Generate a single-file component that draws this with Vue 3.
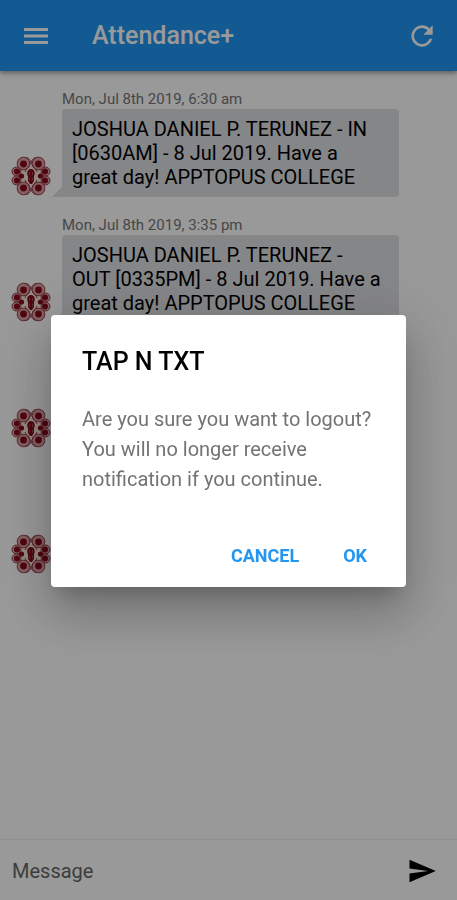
<template>
    <div class="chat-page">
        <header class="chat-header">
            <button type="button" class="icon-button" aria-label="Menu">
                <svg width="28" height="28" viewBox="0 0 28 28">
                    <path
                        d="M2 7.5h24M2 14h24M2 20.5h24"
                        fill="none"
                        stroke="currentColor"
                        stroke-width="2.8"
                    />
                </svg>
            </button>
            <h1 class="chat-title">Attendance+</h1>
            <button type="button" class="icon-button" aria-label="Refresh">
                <svg width="32" height="32" viewBox="0 0 24 24">
                    <path
                        d="M17.65 6.35A7.96 7.96 0 0 0 12 4a8 8 0 1 0 7.73 10h-2.08A6 6 0 1 1 12 6c1.66 0 3.14.69 4.22 1.78L13 11h7V4z"
                        fill="currentColor"
                    />
                </svg>
            </button>
        </header>

        <main class="chat-list">
            <div v-for="item in messages" :key="item.id" class="chat-message">
                <svg class="chat-avatar" viewBox="0 0 40 40">
                    <g v-for="side in sides" :key="side" :transform="side">
                        <path
                            d="M14 3c3 0 5 3 6 7v20c-1 4-3 7-6 7l-8-17z"
                            fill="#f2e6da"
                        />
                        <g fill="#d9a3a8" stroke="#9c3a44" stroke-width="1">
                            <circle cx="5.5" cy="15.5" r="4.5" />
                            <circle cx="5.5" cy="24.5" r="4.5" />
                            <circle cx="12.5" cy="7.5" r="6.3" />
                            <circle cx="12.5" cy="32.5" r="6.3" />
                        </g>
                        <path
                            d="M14 1.5c4 0 6 3 6 7M14 38.5c4 0 6-3 6-7M18.5 9c0 3-4 4-4.500 7M18.500 31c0-3-4-4-4.500-7"
                            fill="none"
                            stroke="#9c3a44"
                            stroke-width="1"
                        />
                        <g fill="#85091a">
                            <circle cx="6" cy="15.5" r="3" />
                            <circle cx="6" cy="24.5" r="3" />
                            <circle cx="12.5" cy="8" r="3.4" />
                            <circle cx="12.5" cy="32" r="3.4" />
                            <circle cx="10.5" cy="20" r="2.6" />
                            <path d="M20 13c-4 0-4.500 5-3 7v5l2 3h1z" />
                        </g>
                        <path
                            d="M18.5 16v3M18.500 21.500v3"
                            fill="none"
                            stroke="#c07078"
                            stroke-width="0.6"
                        />
                    </g>
                </svg>
                <div class="chat-body">
                    <p class="chat-time">{{ item.time }}</p>
                    <p class="chat-bubble">{{ item.text }}</p>
                </div>
            </div>
        </main>

        <form class="chat-form" @submit.prevent="sendMessage">
            <input
                v-model="newMessage"
                type="text"
                class="chat-input"
                placeholder="Message"
                aria-label="Message"
            />
            <button type="submit" class="send-button" aria-label="Send">
                <svg width="30" height="30" viewBox="0 0 24 24">
                    <path
                        d="M2 21l21-9L2 3v7l15 2-15 2z"
                        fill="currentColor"
                    />
                </svg>
            </button>
        </form>

        <!-- logout confirm -->
        <div v-if="isModalOpen" class="modal-overlay" @click="closeModal">
            <div
                class="modal"
                role="alertdialog"
                aria-labelledby="modal-title"
                @click.stop
            >
                <h2 id="modal-title" class="modal-title">TAP N TXT</h2>
                <p class="modal-text">
                    Are you sure you want to logout? You will no longer receive
                    notification if you continue.
                </p>
                <div class="modal-buttons">
                    <button
                        type="button"
                        class="modal-button"
                        @click="closeModal"
                    >
                        CANCEL
                    </button>
                    <button
                        type="button"
                        class="modal-button modal-button-ok"
                        @click="closeModal"
                    >
                        OK
                    </button>
                </div>
            </div>
        </div>
    </div>
</template>

<script setup>
import { ref } from "vue";

const isModalOpen = ref(true);
const newMessage = ref("");

// the avatar is one half drawn twice, mirrored
const sides = ["translate(0 0)", "translate(40 0) scale(-1 1)"];

const messages = ref([
    {
        id: 1,
        time: "Mon, Jul 8th 2019, 6:30 am",
        text: "JOSHUA DANIEL P. TERUNEZ - IN [0630AM] - 8 Jul 2019. Have a great day! APPTOPUS COLLEGE",
    },
    {
        id: 2,
        time: "Mon, Jul 8th 2019, 3:35 pm",
        text: "JOSHUA DANIEL P. TERUNEZ - OUT [0335PM] - 8 Jul 2019. Have a great day! APPTOPUS COLLEGE",
    },
    { id: 3, time: "", text: "" },
    { id: 4, time: "", text: "" },
]);

const sendMessage = () => {
    if (!newMessage.value) {
        return;
    }

    messages.value.push({
        id: messages.value.length + 1,
        time: new Date().toLocaleString(),
        text: newMessage.value,
    });
    newMessage.value = "";
};

const closeModal = () => {
    isModalOpen.value = false;
};
</script>

<style>
body {
    margin: 0;
    background-color: #fff;
}
</style>

<style scoped>
.chat-page {
    display: flex;
    flex-direction: column;
    min-height: 100vh;
    font-family: Roboto, "Liberation Sans", sans-serif;
}

button {
    padding: 0;
    border: none;
    background: none;
    font-family: inherit;
    cursor: pointer;
}

svg {
    display: block;
}

.chat-header {
    display: flex;
    align-items: center;
    height: 71px;
    padding: 0 19px 0 22px;
    box-sizing: border-box;
    background-color: #2196f3;
    color: #fff;
    box-shadow: 0 2px 5px rgba(0, 0, 0, 0.4);
}

.icon-button {
    color: #fff;
}

.chat-title {
    flex: 1;
    margin: 0 0 0 42px;
    font-size: 25px;
    font-weight: 500;
    line-height: 32px;
}

.chat-list {
    flex: 1;
    display: flex;
    flex-direction: column;
    gap: 18px;
    padding: 18px 58px 18px 11px;
}

.chat-message {
    display: flex;
    align-items: flex-end;
    gap: 11px;
}

.chat-avatar {
    flex: none;
    width: 40px;
    height: 40px;
    margin-bottom: 1px;
}

.chat-body {
    flex: 1;
}

.chat-time {
    min-height: 20px;
    margin: 0;
    color: #777;
    font-size: 15px;
    line-height: 20px;
}

.chat-bubble {
    position: relative;
    min-height: 88px;
    margin: 0;
    padding: 8px 16px 8px 10px;
    box-sizing: border-box;
    border-radius: 4px 4px 4px 0;
    background-color: #dedfe3;
    color: #000;
    font-size: 20px;
    line-height: 24px;
}

.chat-bubble::before {
    content: "";
    position: absolute;
    right: 100%;
    bottom: 0;
    border-bottom: 10px solid #dedfe3;
    border-left: 10px solid transparent;
}

.chat-form {
    display: flex;
    align-items: center;
    height: 61px;
    padding: 2px 20px 0 12px;
    box-sizing: border-box;
    border-top: 1px solid #eee;
}

.chat-input {
    flex: 1;
    min-width: 0;
    height: 40px;
    padding: 0;
    border: none;
    outline: none;
    background: none;
    font-family: inherit;
    font-size: 20px;
}

.chat-input::placeholder {
    color: #666;
}

.send-button {
    color: #000;
}

.modal-overlay {
    position: fixed;
    inset: 0;
    display: flex;
    justify-content: center;
    align-items: center;
    padding: 2px 51px 0;
    background-color: rgba(0, 0, 0, 0.4);
}

.modal {
    width: 100%;
    max-width: 420px;
    padding: 31px;
    padding-bottom: 11px;
    box-sizing: border-box;
    border-radius: 4px;
    background-color: #fff;
    box-shadow:
        0 14px 19px -8px rgba(0, 0, 0, 0.2),
        0 30px 48px 4px rgba(0, 0, 0, 0.14),
        0 11px 58px 10px rgba(0, 0, 0, 0.12);
}

.modal-title {
    margin: 0;
    color: #000;
    font-size: 25px;
    font-weight: 500;
    line-height: 32px;
}

.modal-text {
    margin: 26px 0 40px;
    color: #737373;
    font-size: 20px;
    line-height: 30px;
}

.modal-buttons {
    display: flex;
    justify-content: flex-end;
    gap: 20px;
}

.modal-button {
    height: 42px;
    color: #2196f3;
    font-size: 18px;
    font-weight: 700;
}

.modal-button-ok {
    padding: 0 8px 0 24px;
}
</style>
